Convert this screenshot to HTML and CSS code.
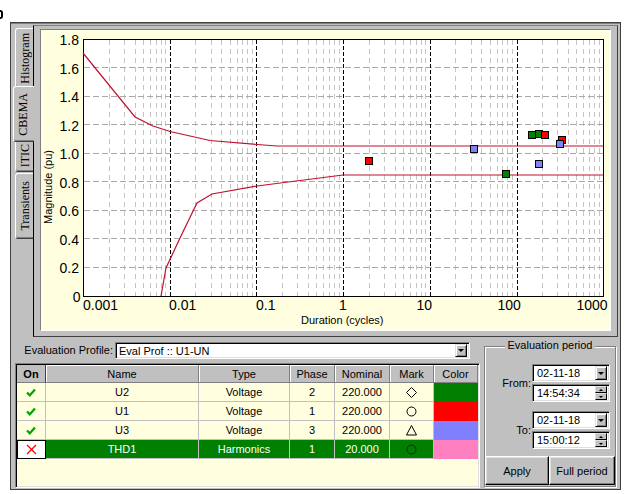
FILE: index.html
```html
<!DOCTYPE html>
<html>
<head>
<meta charset="utf-8">
<link rel="stylesheet" href="styles.css">
</head>
<body>
<div class="topline"><span class="glyph"></span></div>
<div class="frame">
  <div class="upper">
    <div class="tabs">
      <div class="tab t-hist"><span>Histogram</span></div>
      <div class="tab t-cbema sel"><span>CBEMA</span></div>
      <div class="tab t-itic"><span>ITIC</span></div>
      <div class="tab t-trans"><span>Transients</span></div>
    </div>
    <div class="page">
      <div class="chart">
        <svg class="plot" width="569" height="300" viewBox="41 30 569 300">
          <rect x="83.5" y="39.5" width="520" height="257" fill="#fff"/>
          <path fill="none" stroke="#c4c4c4" stroke-dasharray="5 4" d="M109.5 40V296M124.5 40V296M135.5 40V296M143.5 40V296M150.5 40V296M156.5 40V296M161.5 40V296M165.5 40V296M195.5 40V296M211.5 40V296M221.5 40V296M230.5 40V296M237.5 40V296M242.5 40V296M247.5 40V296M252.5 40V296M282.5 40V296M297.5 40V296M308.5 40V296M316.5 40V296M323.5 40V296M329.5 40V296M334.5 40V296M339.5 40V296M369.5 40V296M384.5 40V296M395.5 40V296M403.5 40V296M410.5 40V296M416.5 40V296M421.5 40V296M425.5 40V296M455.5 40V296M471.5 40V296M481.5 40V296M490.5 40V296M497.5 40V296M502.5 40V296M507.5 40V296M512.5 40V296M542.5 40V296M557.5 40V296M568.5 40V296M576.5 40V296M583.5 40V296M589.5 40V296M594.5 40V296M599.5 40V296"/>
          <path fill="none" stroke="#a8a8a8" stroke-dasharray="6 3" d="M84 67.5H603M84 96.5H603M84 124.5H603M84 153.5H603M84 181.5H603M84 210.5H603M84 238.5H603M84 267.5H603"/>
          <path fill="none" stroke="#000" stroke-dasharray="4 2" d="M170.5 40V296M256.5 40V296M343.5 40V296M430.5 40V296M517.5 40V296"/>
          <rect x="83.5" y="39.5" width="520" height="257" fill="none" stroke="#000"/>
          <polyline fill="none" stroke="#c01030" stroke-width="1.2" points="83,53 135,117 153,126 170,131.5 210,140.5 257,144.5 277,146 603,146"/>
          <polyline fill="none" stroke="#c01030" stroke-width="1.2" points="161,296 166,268 180,238 197,203 212,194 257,186 343,175 603,175"/>
          <g stroke="#000" stroke-width="1">
            <rect x="528.5" y="131.5" width="7" height="7" fill="#007f00"/>
            <rect x="535.5" y="130.5" width="7" height="7" fill="#007f00"/>
            <rect x="541.5" y="131.5" width="7" height="7" fill="#ff0000"/>
            <rect x="558.5" y="136.5" width="7" height="7" fill="#ff0000"/>
            <rect x="556.5" y="140.5" width="7" height="7" fill="#8080ff"/>
            <rect x="535.5" y="160.5" width="7" height="7" fill="#8080ff"/>
            <rect x="470.5" y="145.5" width="7" height="7" fill="#8080ff"/>
            <rect x="365.5" y="157.5" width="7" height="7" fill="#ff0000"/>
            <rect x="502.5" y="170.5" width="7" height="7" fill="#007f00"/>
          </g>
          <g class="ylab" text-anchor="end">
            <text x="79" y="45">1.8</text>
            <text x="79" y="73.5">1.6</text>
            <text x="79" y="102">1.4</text>
            <text x="79" y="130.7">1.2</text>
            <text x="79" y="159.2">1.0</text>
            <text x="79" y="187.8">0.8</text>
            <text x="79" y="216.3">0.6</text>
            <text x="79" y="244.9">0.4</text>
            <text x="79" y="273.4">0.2</text>
            <text x="80.5" y="302">0</text>
          </g>
          <g class="xlab">
            <text x="83" y="310">0.001</text>
            <text x="169" y="310">0.01</text>
            <text x="256" y="310">0.1</text>
            <text x="339" y="310">1</text>
            <text x="416.5" y="310">10</text>
            <text x="497.5" y="310">100</text>
            <text x="576.5" y="310">1000</text>
          </g>
          <text class="title" x="301" y="324">Duration (cycles)</text>
          <text class="title" text-anchor="middle" transform="translate(52 187) rotate(-90)">Magnitude (pu)</text>
        </svg>
      </div>
    </div>
  </div>
  <div class="lower">
    <div class="left">
      <div class="profile">
        <span class="plabel">Evaluation Profile:</span>
        <div class="combo"><span>Eval Prof :: U1-UN</span><span class="ddbtn"><span class="tri"></span></span></div>
      </div>
      <div class="grid">
        <div class="hc on">On</div>
        <div class="hc">Name</div>
        <div class="hc">Type</div>
        <div class="hc">Phase</div>
        <div class="hc">Nominal</div>
        <div class="hc">Mark</div>
        <div class="hc">Color</div>

        <div class="c"><svg width="10" height="9" viewBox="0 0 10 9"><path d="M1 4.5L3.8 7.3L9 1.5" fill="none" stroke="#00a400" stroke-width="2.2"/></svg></div>
        <div class="c">U2</div>
        <div class="c">Voltage</div>
        <div class="c">2</div>
        <div class="c">220.000</div>
        <div class="c"><svg width="11" height="11" viewBox="0 0 11 11"><path d="M5.5 0.5L10.5 5.5L5.5 10.5L0.5 5.5Z" fill="none" stroke="#000"/></svg></div>
        <div class="c sw" style="background:#007f00"></div>

        <div class="c"><svg width="10" height="9" viewBox="0 0 10 9"><path d="M1 4.5L3.8 7.3L9 1.5" fill="none" stroke="#00a400" stroke-width="2.2"/></svg></div>
        <div class="c">U1</div>
        <div class="c">Voltage</div>
        <div class="c">1</div>
        <div class="c">220.000</div>
        <div class="c"><svg width="11" height="11" viewBox="0 0 11 11"><circle cx="5.5" cy="5.5" r="4.5" fill="none" stroke="#000"/></svg></div>
        <div class="c sw" style="background:#ff0000"></div>

        <div class="c"><svg width="10" height="9" viewBox="0 0 10 9"><path d="M1 4.5L3.8 7.3L9 1.5" fill="none" stroke="#00a400" stroke-width="2.2"/></svg></div>
        <div class="c">U3</div>
        <div class="c">Voltage</div>
        <div class="c">3</div>
        <div class="c">220.000</div>
        <div class="c"><svg width="11" height="11" viewBox="0 0 11 11"><path d="M5.5 0.5L10.5 10L0.5 10Z" fill="none" stroke="#000"/></svg></div>
        <div class="c sw" style="background:#8080ff"></div>

        <div class="c focus"><svg width="11" height="11" viewBox="0 0 11 11"><path d="M1 1L10 10M10 1L1 10" fill="none" stroke="#ff0000" stroke-width="1.3"/></svg></div>
        <div class="c s">THD1</div>
        <div class="c s">Harmonics</div>
        <div class="c s">1</div>
        <div class="c s">20.000</div>
        <div class="c s"><svg width="11" height="11" viewBox="0 0 11 11"><circle cx="5.5" cy="5.5" r="4.5" fill="none" stroke="#003000"/></svg></div>
        <div class="c sw" style="background:#ff80c0"></div>
      </div>
    </div>
    <div class="period">
      <div class="ptitle"><span>Evaluation period</span></div>
      <div class="pair">
        <span class="flabel">From:</span>
        <div class="fields">
          <div class="field"><span>02-11-18</span><span class="ddbtn"><span class="tri"></span></span></div>
          <div class="field"><span>14:54:34</span><span class="spin"><span class="sb"><span class="tup"></span></span><span class="sb"><span class="tdn"></span></span></span></div>
        </div>
      </div>
      <div class="pair p2">
        <span class="flabel">To:</span>
        <div class="fields">
          <div class="field"><span>02-11-18</span><span class="ddbtn"><span class="tri"></span></span></div>
          <div class="field"><span>15:00:12</span><span class="spin"><span class="sb"><span class="tup"></span></span><span class="sb"><span class="tdn"></span></span></span></div>
        </div>
      </div>
      <div class="buttons">
        <div class="btn apply">Apply</div>
        <div class="btn full">Full period</div>
      </div>
    </div>
  </div>
</div>
</body>
</html>
```

FILE: styles.css
```css
* { box-sizing: border-box; }
body {
  margin: 0;
  background: #fff;
  font-family: "Liberation Sans", Arial, sans-serif;
  font-size: 11px;
  color: #000;
}
.topline { height: 22px; padding-top: 10px; }
.glyph {
  display: block;
  width: 3px;
  height: 9px;
  border: 2px solid #000;
  border-left: 0;
  border-radius: 0 4px 4px 0;
}
.frame {
  margin-left: 10px;
  width: 611px;
  height: 468px;
  border: 1px solid #404040;
  box-shadow: inset 0 1px #808080;
  background: #c0c0c0;
}
.upper { display: flex; height: 314px; }
.tabs {
  width: 22px;
  padding-top: 5px;
  display: flex;
  flex-direction: column;
  align-items: flex-end;
}
.tab {
  width: 18px;
  display: flex;
  align-items: center;
  justify-content: flex-start;
  padding-left: 3px;
  border: 1px solid;
  border-right: 0;
  border-color: #fff transparent #404040 #fff;
  border-radius: 3px 0 0 3px;
  box-shadow: inset 0 -1px #808080;
  font-family: "Liberation Serif", "Times New Roman", serif;
  font-size: 12px;
  background: #c0c0c0;
}
.tab span {
  writing-mode: vertical-rl;
  transform: rotate(180deg);
  line-height: 13px;
}
.t-hist { height: 60px; }
.t-cbema { height: 56px; margin: -2px -1px -2px 0; width: 21px; position: relative; z-index: 1; }
.t-itic { height: 32px; }
.t-trans { height: 66px; margin-top: 1px; }
.page {
  width: 585px;
  margin-top: 2px;
  border-top: 1px solid #808080;
  border-left: 1px solid #000;
  border-right: 1px solid #404040;
  border-bottom: 1px solid #404040;
  padding: 3px 6px 5px 6px;
  height: 312px;
}
.chart {
  width: 571px;
  height: 302px;
  border: 1px solid;
  border-color: #808080 #fff #fff #808080;
  background: #ffffe0;
}
.plot { display: block; }
.ylab, .xlab { font-family: "Liberation Sans", Arial, sans-serif; font-size: 14px; }
.title { font-family: "Liberation Sans", Arial, sans-serif; font-size: 11px; }

.lower { display: flex; padding: 4px 0 0 4px; height: 152px; }
.left { width: 465px; }
.profile { display: flex; height: 18px; align-items: center; margin-bottom: 4px; }
.plabel { width: 100px; text-align: right; padding-right: 2px; }
.combo {
  width: 355px;
  height: 17px;
  margin-top: 1px;
  border: 1px solid;
  border-color: #808080 #fff #fff #808080;
  box-shadow: inset 1px 1px #000, inset -1px -1px #dfdfdf;
  background: #fff;
  display: flex;
  align-items: center;
  justify-content: space-between;
  padding: 0 2px 0 3px;
}
.ddbtn {
  width: 12px;
  height: 13px;
  background: #c0c0c0;
  border: 1px solid;
  border-color: #dfdfdf #000 #000 #dfdfdf;
  box-shadow: inset 1px 1px #fff, inset -1px -1px #808080;
  display: flex;
  align-items: center;
  justify-content: center;
}
.tri {
  width: 0;
  height: 0;
  border-style: solid;
  border-width: 3px 3px 0 3px;
  border-color: #000 transparent transparent transparent;
}
.grid {
  height: 125px;
  border: 1px solid;
  border-color: #808080 #fff #fff #808080;
  box-shadow: inset 1px 1px #000, inset -1px -1px #dfdfdf;
  background: #ffffe0;
  padding: 1px;
  display: grid;
  grid-template-columns: 29px 153px 91px 45px 55px 44px 44px;
  grid-template-rows: 18px repeat(4, 19px);
  align-content: start;
}
.hc {
  background: #c0c0c0;
  border-right: 1px solid #808080;
  border-bottom: 1px solid #808080;
  box-shadow: inset 1px 1px #fff;
  display: flex;
  align-items: center;
  justify-content: center;
}
.hc.on { font-weight: bold; box-shadow: none; border-right-color: #404040; }
.c {
  border-right: 1px solid #c0c0c0;
  border-bottom: 1px solid #c0c0c0;
  display: flex;
  align-items: center;
  justify-content: center;
}
.c.s { background: #007f00; color: #fff; border-color: #c0c0c0; }
.c.focus { background: #fff; border: 1px solid #000; }
.c.sw { border-color: transparent; }

.period {
  position: relative;
  margin: 5px 0 0 4px;
  width: 132px;
  height: 141px;
  border: 1px solid #808080;
  box-shadow: inset 1px 1px #fff, 1px 1px #fff;
  padding-top: 17px;
  display: flex;
  flex-direction: column;
}
.ptitle {
  position: absolute;
  top: -8px;
  left: 0;
  right: 0;
  text-align: center;
  line-height: 13px;
}
.ptitle span { background: #c0c0c0; padding: 0 2px; }
.pair { display: flex; align-items: center; }
.p2 { margin-top: 9px; }
.flabel { width: 47px; text-align: right; padding-right: 1px; }
.fields { width: 78px; display: flex; flex-direction: column; gap: 2px; }
.field {
  height: 18px;
  border: 1px solid;
  border-color: #808080 #fff #fff #808080;
  box-shadow: inset 1px 1px #000, inset -1px -1px #dfdfdf;
  background: #fff;
  display: flex;
  align-items: center;
  justify-content: space-between;
  padding: 0 2px 0 4px;
}
.field .ddbtn { height: 14px; }
.spin { width: 12px; height: 14px; display: flex; flex-direction: column; }
.sb {
  flex: 1;
  background: #c0c0c0;
  border: 1px solid;
  border-color: #dfdfdf #000 #000 #dfdfdf;
  display: flex;
  align-items: center;
  justify-content: center;
}
.tup, .tdn { width: 0; height: 0; border-style: solid; }
.tup { border-width: 0 2px 2px 2px; border-color: transparent transparent #000 transparent; }
.tdn { border-width: 2px 2px 0 2px; border-color: #000 transparent transparent transparent; }
.buttons { display: flex; margin-top: 7px; }
.btn {
  height: 29px;
  background: #c0c0c0;
  border: 1px solid;
  border-color: #fff #000 #000 #fff;
  box-shadow: inset -1px -1px #808080, inset 1px 1px #dfdfdf;
  display: flex;
  align-items: center;
  justify-content: center;
}
.apply { width: 64px; }
.full { width: 66px; }
```
